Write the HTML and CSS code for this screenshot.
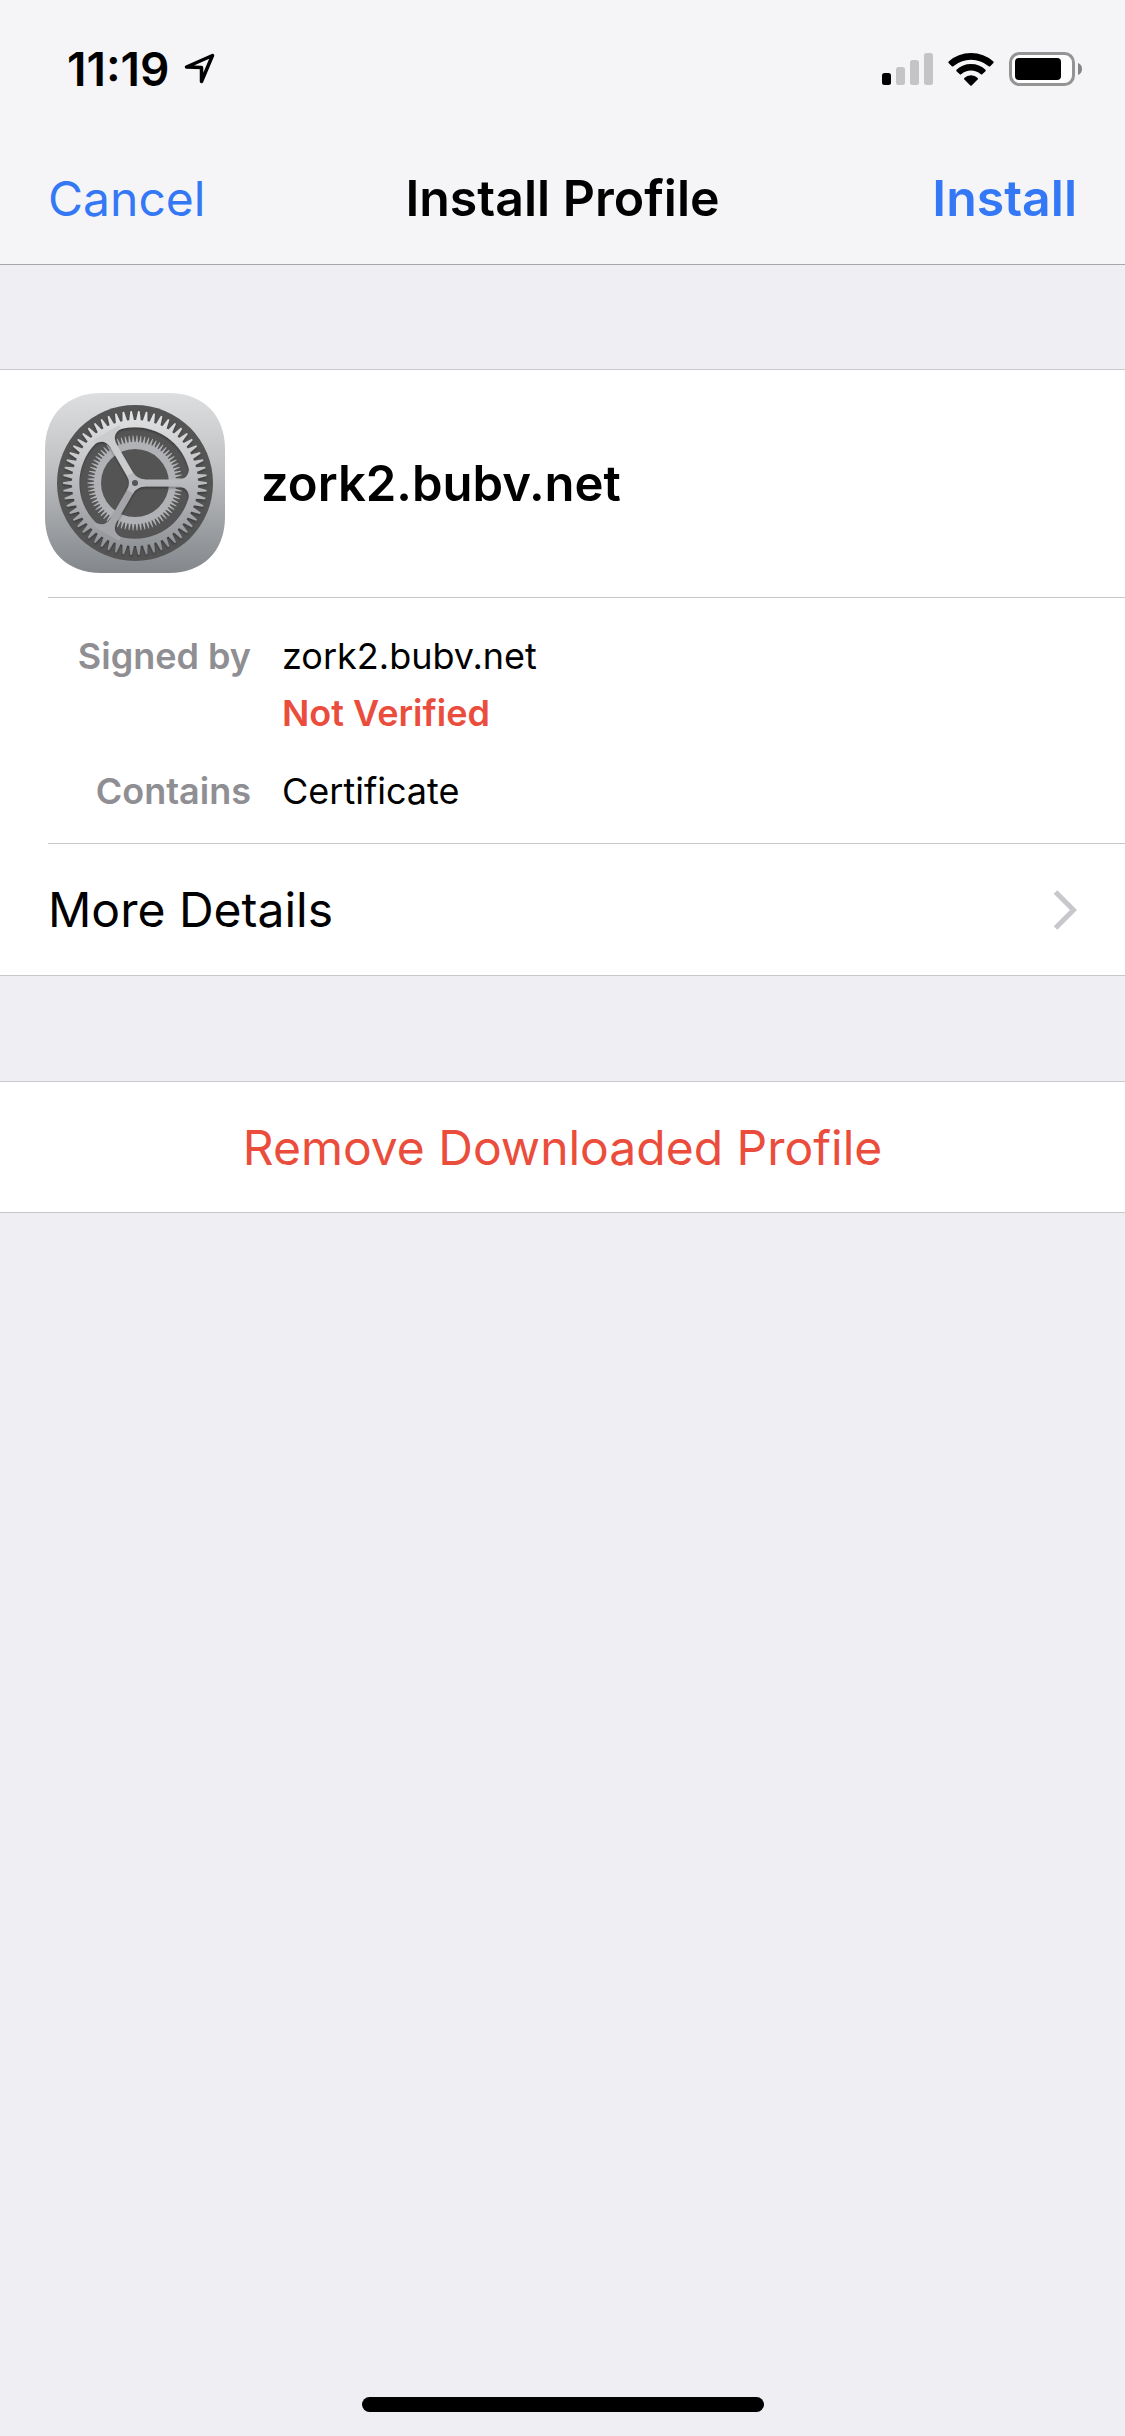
FILE: index.html
```html
<!DOCTYPE html>
<html lang="en">
<head>
<meta charset="utf-8">
<meta name="viewport" content="width=device-width, initial-scale=1">
<title>Install Profile</title>
<link rel="stylesheet" href="styles.css">
<script src="gears.js" defer></script>
</head>
<body>
<div class="screen">
  <header class="header">
    <div class="status">
      <div class="status-left">
        <time class="clock">11:19</time>
        <svg class="location" width="32" height="32" viewBox="0 0 32 32" aria-hidden="true"><path d="M2.500 14 28.500 2.500 17.500 28.500V14.500Z" fill="none" stroke="#000" stroke-width="3.500" stroke-linejoin="round"/></svg>
      </div>
      <div class="status-right">
        <svg width="51" height="32" viewBox="0 0 51 32" aria-hidden="true"><rect y="20" width="9" height="12" rx="2.500"/><g fill="#c4c4c6"><rect x="14" y="14" width="9" height="18" rx="2.500"/><rect x="28" y="7" width="9" height="25" rx="2.500"/><rect x="42" width="9" height="32" rx="2.500"/></g></svg>
        <svg width="46" height="34" viewBox="0 0 46 34" aria-hidden="true"><path d="M0.600 9.500Q10 1 23 1T45.400 9.500Q46 10.300 45.400 11L42.200 14.200Q41.500 14.700 40.700 14.200Q33 7.700 23 7.700T5.300 14.200Q4.500 14.700 3.800 14.200L.6 11Q0 10.300.6 9.500Z"/><path d="M8.500 17.800Q14.500 12 23 12T37.500 17.800Q38 18.500 37.500 19.200L34.200 22.300Q33.500 22.800 32.800 22.200Q28.500 18.600 23 18.600T13.200 22.200Q12.500 22.800 11.800 22.300L8.500 19.200Q8 18.500 8.500 17.800Z"/><path d="M16.300 26Q19 23.200 23 23.200T29.700 26Q30.200 26.800 29.600 27.500L23.700 33.400Q23 34 22.300 33.400L16.400 27.500Q15.800 26.800 16.300 26Z"/></svg>
        <svg width="73" height="34" viewBox="0 0 73 34" aria-hidden="true"><rect x="1.500" y="1.500" width="63" height="31" rx="9" fill="#fdfdfd" stroke="#949495" stroke-width="3"/><rect x="6" y="6" width="46" height="22" rx="4"/><path d="M69 11Q73 12.500 73 17T69 23Z" fill="#858586"/></svg>
      </div>
    </div>
    <nav class="nav">
      <button class="nav-button" type="button">Cancel</button>
      <h1 class="title">Install Profile</h1>
      <button class="nav-button primary" type="button">Install</button>
    </nav>
  </header>

  <main class="content">
    <section class="group">
      <div class="profile">
        <svg class="app-icon" width="180" height="180" viewBox="0 0 180 180" role="img" aria-label="Settings">
          <defs>
            <linearGradient id="plate" gradientUnits="userSpaceOnUse" x1="0" y1="0" x2="0" y2="180"><stop offset="0" stop-color="#dddee0"/><stop offset=".35" stop-color="#c5c6c8"/><stop offset="1" stop-color="#83878b"/></linearGradient>
            <linearGradient id="metal" gradientUnits="userSpaceOnUse" x1="0" y1="-72" x2="0" y2="72"><stop offset="0" stop-color="#e3e4e5"/><stop offset=".5" stop-color="#b9babd"/><stop offset="1" stop-color="#8b8e92"/></linearGradient>
            <filter id="shade" x="-20%" y="-20%" width="140%" height="140%"><feDropShadow dx="0" dy="1.500" stdDeviation="1.200" flood-opacity=".35"/></filter>
          </defs>
          <path d="M56 0H124C158 0 180 22 180 56V124C180 158 158 180 124 180H56C22 180 0 158 0 124V56C0 22 22 0 56 0Z" fill="url(#plate)"/>
          <g transform="translate(90 90)">
            <circle r="78" fill="#545454"/>
            <path class="gear" data-teeth="74" data-root="41" data-tip="47.500" data-hole="34" fill="#b1b2b5"/>
            <g filter="url(#shade)">
              <g fill="url(#metal)">
                <path class="gear" data-teeth="58" data-root="63" data-tip="72" data-hole="55.700"/>
                <path d="M-5 -3.500H43Q54 -4 54 -15L58 -15V15L54 15Q54 4 43 3.500H-5Z"/>
              </g>
              <path d="M-5 -3.500H43Q54 -4 54 -15L58 -15V15L54 15Q54 4 43 3.500H-5Z" transform="rotate(120)" fill="#a3a5a9"/>
              <path d="M-5 -3.500H43Q54 -4 54 -15L58 -15V15L54 15Q54 4 43 3.500H-5Z" transform="rotate(240)" fill="#cbccce"/>
              <path d="M10 -3.500Q2 -4 -2 -10.400L-8 -7Q-4 0 -8 7L-2 10.400Q2 4 10 3.500Z" fill="#b9babd"/>
            </g>
            <circle r="3" fill="#545454"/>
          </g>
        </svg>
        <h2 class="profile-name">zork2.bubv.net</h2>
      </div>
      <dl class="facts">
        <div class="fact">
          <dt>Signed by</dt>
          <dd>zork2.bubv.net</dd>
          <dd class="warning">Not Verified</dd>
        </div>
        <div class="fact">
          <dt>Contains</dt>
          <dd>Certificate</dd>
        </div>
      </dl>
      <a class="more" href="#details">More Details
        <svg width="24" height="40" viewBox="0 0 24 40" aria-hidden="true"><path d="M2.500 2 20.500 20 2.500 38" fill="none" stroke="#c7c7cc" stroke-width="5"/></svg>
      </a>
    </section>
    <section class="group">
      <button class="remove" type="button">Remove Downloaded Profile</button>
    </section>
  </main>
  <footer class="home"><span class="home-bar"></span></footer>
</div>
</body>
</html>
```
FILE: styles.css
```css
* { box-sizing: border-box; }

body {
  margin: 0;
  background: #efeef3;
  color: #000;
  font-family: Inter, "Liberation Sans", sans-serif;
  font-size: 48px;
}

h1, h2, dl, dd { margin: 0; font-size: inherit; }

svg { display: block; flex: none; }

button {
  padding: 0;
  border: 0;
  background: none;
  font: inherit;
}

.screen {
  display: flex;
  flex-direction: column;
  min-height: 100vh;
}

.header {
  border-bottom: 1px solid #a7a7aa;
  background: #f5f5f7;
}

.status {
  display: flex;
  justify-content: space-between;
  height: 132px;
  padding: 0 43px 0 67px;
}

.status-left, .status-right {
  display: flex;
  align-items: center;
  height: 138px;
}

.status-left { gap: 15px; }
.status-right { gap: 15px; }

.clock { font-size: 46px; font-weight: 600; }

.nav {
  display: grid;
  grid-template-columns: 1fr auto 1fr;
  align-items: center;
  height: 132px;
  padding: 0 48px;
}

.nav-button { color: #3478f6; justify-self: start; }
.nav-button.primary { justify-self: end; }
.title, .primary { font-size: 50px; font-weight: 600; }
.profile-name { font-size: 49px; font-weight: 600; }

.content {
  display: grid;
  gap: 105px;
  padding-top: 104px;
}

.group {
  border-top: 1px solid #c8c7cc;
  border-bottom: 1px solid #c8c7cc;
  background: #fff;
  padding-left: 48px;
}

.profile {
  display: flex;
  align-items: center;
  gap: 36px;
  height: 228px;
  padding-bottom: 1px;
  border-bottom: 1px solid #c8c7cc;
}

.app-icon { margin-left: -3px; }

.facts {
  display: grid;
  gap: 21px;
  padding: 30px 0 23px;
  border-bottom: 1px solid #c8c7cc;
  font-size: 36px;
  line-height: 57px;
}

.fact {
  display: grid;
  grid-template-columns: 203px 1fr;
  column-gap: 31px;
}

.fact dt { color: #8e8e93; font-weight: 600; text-align: right; }
.fact dd { grid-column: 2; }
.fact .warning { color: #eb4d3d; font-weight: 600; }

.more {
  display: flex;
  align-items: center;
  justify-content: space-between;
  height: 131px;
  padding-right: 48px;
  color: inherit;
  text-decoration: none;
}

.remove {
  width: 100%;
  height: 130px;
  padding-right: 48px;
  color: #eb4d3d;
}

.home {
  display: flex;
  justify-content: center;
  margin-top: auto;
  padding: 24px;
}

.home-bar {
  width: 402px;
  height: 15px;
  border-radius: 8px;
  background: #000;
}
```
FILE: gears.js
```js
// Builds a toothed ring centred on the origin from its radii and tooth count.
document.querySelectorAll(".gear").forEach((gear) => {
  const { teeth, root, tip, hole } = gear.dataset;
  const step = (2 * Math.PI) / teeth;
  const at = (radius, angle) =>
    `${(radius * Math.cos(angle)).toFixed(2)} ${(radius * Math.sin(angle)).toFixed(2)}`;
  const points = [];
  for (let i = 0; i < teeth; i++) {
    const a = i * step;
    points.push(at(root, a - step * 0.34), at(tip, a - step * 0.1), at(tip, a + step * 0.1), at(root, a + step * 0.34));
  }
  gear.setAttribute("d",
    `M${points.join("L")}ZM${hole} 0A${hole} ${hole} 0 1 0 -${hole} 0A${hole} ${hole} 0 1 0 ${hole} 0Z`);
  gear.setAttribute("fill-rule", "evenodd");
});
```
